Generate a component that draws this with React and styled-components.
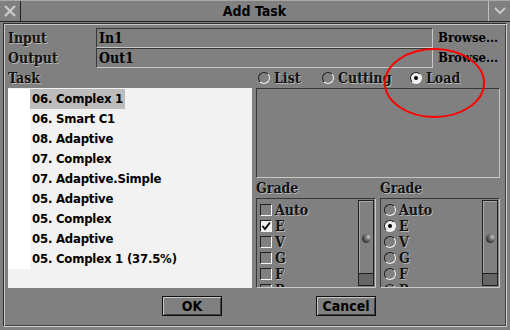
import React from "react";
import styled, { createGlobalStyle } from "styled-components";

const SANS = `"DejaVu Sans Condensed", "Liberation Sans", sans-serif`;
const SERIF = `"DejaVu Serif Condensed", "Liberation Serif", serif`;

const Global = createGlobalStyle`
  html, body { margin: 0; padding: 0; background: #808080; }
  body { font-family: ${SANS}; }
`;

const Window = styled.div`
  position: relative;
  width: 510px;
  height: 330px;
  background: #808080;
  display: flex;
  flex-direction: column;
  box-sizing: border-box;
  overflow: hidden;
  font-family: ${SANS};
  font-weight: bold;
  font-size: 13px;
  color: #000;
`;

const TitleBar = styled.div`
  display: flex;
  height: 22px;
  box-sizing: border-box;
  border-top: 1px solid #a8a8a8;
  border-bottom: 1px solid #202020;
  flex-shrink: 0;
`;

const TitleBox = styled.div`
  width: ${(p) => p.$w}px;
  display: grid;
  place-items: center;
  box-sizing: border-box;
  border-right: ${(p) => (p.$side === "left" ? "1px solid #202020" : "none")};
  border-left: ${(p) => (p.$side === "right" ? "1px solid #c0c0c0" : "none")};
`;

const TitleText = styled.div`
  flex: 1;
  text-align: center;
  line-height: 20px;
  font-size: 14px;
`;

const Frame = styled.div`
  flex: 1;
  margin: 1px 3px 3px 3px;
  border: 1px solid;
  border-color: #303030 #d0d0d0 #d0d0d0 #303030;
  box-shadow: inset 1px 1px 0 #c8c8c8, inset -1px -1px 0 #404040;
  padding: 4px 4px 0 4px;
  display: flex;
  flex-direction: column;
`;

const FieldRow = styled.div`
  display: grid;
  grid-template-columns: 88px 337px 1fr;
  height: 20px;
  align-items: stretch;
`;

const Label = styled.div`
  font-family: ${SERIF};
  font-size: 14px;
  color: #141414;
  text-shadow: 1px 1px 0 #b4b4b4;
  line-height: 20px;
  white-space: nowrap;
`;

const Field = styled.div`
  box-sizing: border-box;
  border: 1px solid;
  border-color: #383838 #c8c8c8 #c8c8c8 #383838;
  padding-left: 2px;
  line-height: 18px;
  font-family: ${SERIF};
  font-size: 14px;
`;

const Browse = styled.div`
  padding-left: 5px;
  line-height: 20px;
  white-space: nowrap;
  font-family: ${SERIF};
  font-size: 13px;
`;

const Main = styled.div`
  display: grid;
  grid-template-columns: 244px 244px;
  column-gap: 4px;
`;

const Column = styled.div`
  display: flex;
  flex-direction: column;
`;

const ListBox = styled.div`
  height: 200px;
  background: #f2f2f2;
  padding-top: 1px;
  box-sizing: border-box;
`;

const ListRow = styled.div`
  display: flex;
  height: 20px;
`;

const Gutter = styled.div`
  width: 22px;
  background: #ffffff;
`;

const ItemText = styled.div`
  line-height: 20px;
  padding: 0 2px;
  font-size: 13px;
  letter-spacing: -0.2px;
  background: ${(p) => (p.$sel ? "#bcbcbc" : "transparent")};
  white-space: nowrap;
`;

const RadioRow = styled.div`
  display: flex;
  height: 20px;
  align-items: center;
  padding-left: 2px;
`;

const Option = styled.div`
  display: flex;
  align-items: center;
  gap: 4px;
  width: ${(p) => (p.$w ? `${p.$w}px` : "auto")};
  font-family: ${SERIF};
  font-size: 14px;
  color: #141414;
  text-shadow: 1px 1px 0 #b4b4b4;
  line-height: 20px;
`;

const RadioCircle = styled.span`
  width: 12px;
  height: 12px;
  box-sizing: border-box;
  border-radius: 50%;
  border: 1px solid;
  border-color: #202020 #f4f4f4 #f4f4f4 #202020;
  background: ${(p) => (p.$on ? "#f0f0f0" : "#808080")};
  display: grid;
  place-items: center;
  flex-shrink: 0;
  &::after {
    content: "";
    width: 4px;
    height: 4px;
    border-radius: 50%;
    background: ${(p) => (p.$on ? "#000" : "transparent")};
  }
`;

const Sunken = styled.div`
  height: ${(p) => p.$h}px;
  box-sizing: border-box;
  border: 1px solid;
  border-color: #383838 #c8c8c8 #c8c8c8 #383838;
`;

const GradeGrid = styled.div`
  display: grid;
  grid-template-columns: 120px 120px;
  column-gap: 4px;
  grid-template-rows: 20px 90px;
`;

const GradeBox = styled.div`
  box-sizing: border-box;
  border: 1px solid;
  border-color: #383838 #c8c8c8 #c8c8c8 #383838;
  display: flex;
  overflow: hidden;
`;

const GradeItems = styled.div`
  flex: 1;
  padding: 3px 0 0 3px;
  overflow: hidden;
`;

const GradeRow = styled.div`
  display: flex;
  align-items: center;
  gap: 3px;
  height: 16px;
  font-family: ${SERIF};
  font-size: 14px;
  color: #141414;
  text-shadow: 1px 1px 0 #b4b4b4;
  line-height: 16px;
`;

const CheckBox = styled.span`
  width: 12px;
  height: 12px;
  box-sizing: border-box;
  border: 1px solid;
  border-color: #202020 #f4f4f4 #f4f4f4 #202020;
  background: ${(p) => (p.$on ? "#f0f0f0" : "#808080")};
  display: grid;
  place-items: center;
  flex-shrink: 0;
`;

const Track = styled.div`
  width: 16px;
  margin: 1px 1px 1px 0;
  box-sizing: border-box;
  border: 1px solid #202020;
  box-shadow: inset 1px 1px 0 #a8a8a8;
  display: flex;
  flex-direction: column;
`;

const TrackUpper = styled.div`
  flex: 1;
  display: grid;
  place-items: center;
  padding-top: 2px;
`;

const Knob = styled.span`
  width: 9px;
  height: 9px;
  border-radius: 50%;
  background: radial-gradient(circle at 72% 32%, #c8c8c8 0%, #686868 40%, #2a2a2a 80%, #1a1a1a 100%);
`;

const Thumb = styled.div`
  height: 11px;
  background: #666666;
  border-top: 1px solid #202020;
`;

const ButtonRow = styled.div`
  display: flex;
  padding: 8px 0 0 154px;
  gap: 94px;
`;

const Button = styled.div`
  width: 60px;
  height: 20px;
  box-sizing: border-box;
  border: 1px solid #101010;
  box-shadow: inset 1px 1px 0 #c8c8c8, inset -1px -1px 0 #404040;
  text-align: center;
  line-height: 18px;
  font-size: 14px;
`;

const Annotation = styled.svg`
  position: absolute;
  left: 0;
  top: 0;
  pointer-events: none;
`;

const items = [
  "06. Complex 1",
  "06. Smart C1",
  "08. Adaptive",
  "07. Complex",
  "07. Adaptive.Simple",
  "05. Adaptive",
  "05. Complex",
  "05. Adaptive",
  "05. Complex 1 (37.5%)",
];

const grades = ["Auto", "E", "V", "G", "F", "R"];

function ScrollBar() {
  return (
    <Track>
      <TrackUpper>
        <Knob />
      </TrackUpper>
      <Thumb />
    </Track>
  );
}

export default function App() {
  return (
    <Window>
      <Global />
      <TitleBar>
        <TitleBox $w={21} $side="left">
          <svg width="12" height="12" viewBox="0 0 12 12">
            <path d="M1 1 L11 11 M11 1 L1 11" stroke="#c8c8c8" strokeWidth="2.4" />
          </svg>
        </TitleBox>
        <TitleText>Add Task</TitleText>
        <TitleBox $w={22} $side="right">
          <svg width="12" height="8" viewBox="0 0 12 8">
            <path d="M1 1 L6 6 L11 1" stroke="#c8c8c8" strokeWidth="2" fill="none" />
          </svg>
        </TitleBox>
      </TitleBar>
      <Frame>
        <FieldRow>
          <Label>Input</Label>
          <Field>In1</Field>
          <Browse>Browse...</Browse>
        </FieldRow>
        <FieldRow>
          <Label>Output</Label>
          <Field>Out1</Field>
          <Browse>Browse...</Browse>
        </FieldRow>
        <Main>
          <Column>
            <Label>Task</Label>
            <ListBox>
              {items.map((t, i) => (
                <ListRow key={i}>
                  <Gutter />
                  <ItemText $sel={i === 0}>{t}</ItemText>
                </ListRow>
              ))}
            </ListBox>
          </Column>
          <Column>
            <RadioRow>
              <Option $w={64}>
                <RadioCircle />
                List
              </Option>
              <Option $w={88}>
                <RadioCircle />
                Cutting
              </Option>
              <Option>
                <RadioCircle $on />
                Load
              </Option>
            </RadioRow>
            <Sunken $h={90} />
            <GradeGrid>
              <Label>Grade</Label>
              <Label>Grade</Label>
              <GradeBox>
                <GradeItems>
                  {grades.map((g) => (
                    <GradeRow key={g}>
                      <CheckBox $on={g === "E"}>
                        {g === "E" && (
                          <svg width="10" height="10" viewBox="0 0 10 10">
                            <path d="M1.5 5 L4 8 L9 1.5" stroke="#000" strokeWidth="1.8" fill="none" />
                          </svg>
                        )}
                      </CheckBox>
                      {g}
                    </GradeRow>
                  ))}
                </GradeItems>
                <ScrollBar />
              </GradeBox>
              <GradeBox>
                <GradeItems>
                  {grades.map((g) => (
                    <GradeRow key={g}>
                      <RadioCircle $on={g === "E"} />
                      {g}
                    </GradeRow>
                  ))}
                </GradeItems>
                <ScrollBar />
              </GradeBox>
            </GradeGrid>
          </Column>
        </Main>
        <ButtonRow>
          <Button>OK</Button>
          <Button>Cancel</Button>
        </ButtonRow>
      </Frame>
      <Annotation width="510" height="330" viewBox="0 0 510 330">
        <ellipse cx="434.5" cy="83" rx="49.5" ry="34" fill="none" stroke="#ff0000" strokeWidth="2" />
      </Annotation>
    </Window>
  );
}
